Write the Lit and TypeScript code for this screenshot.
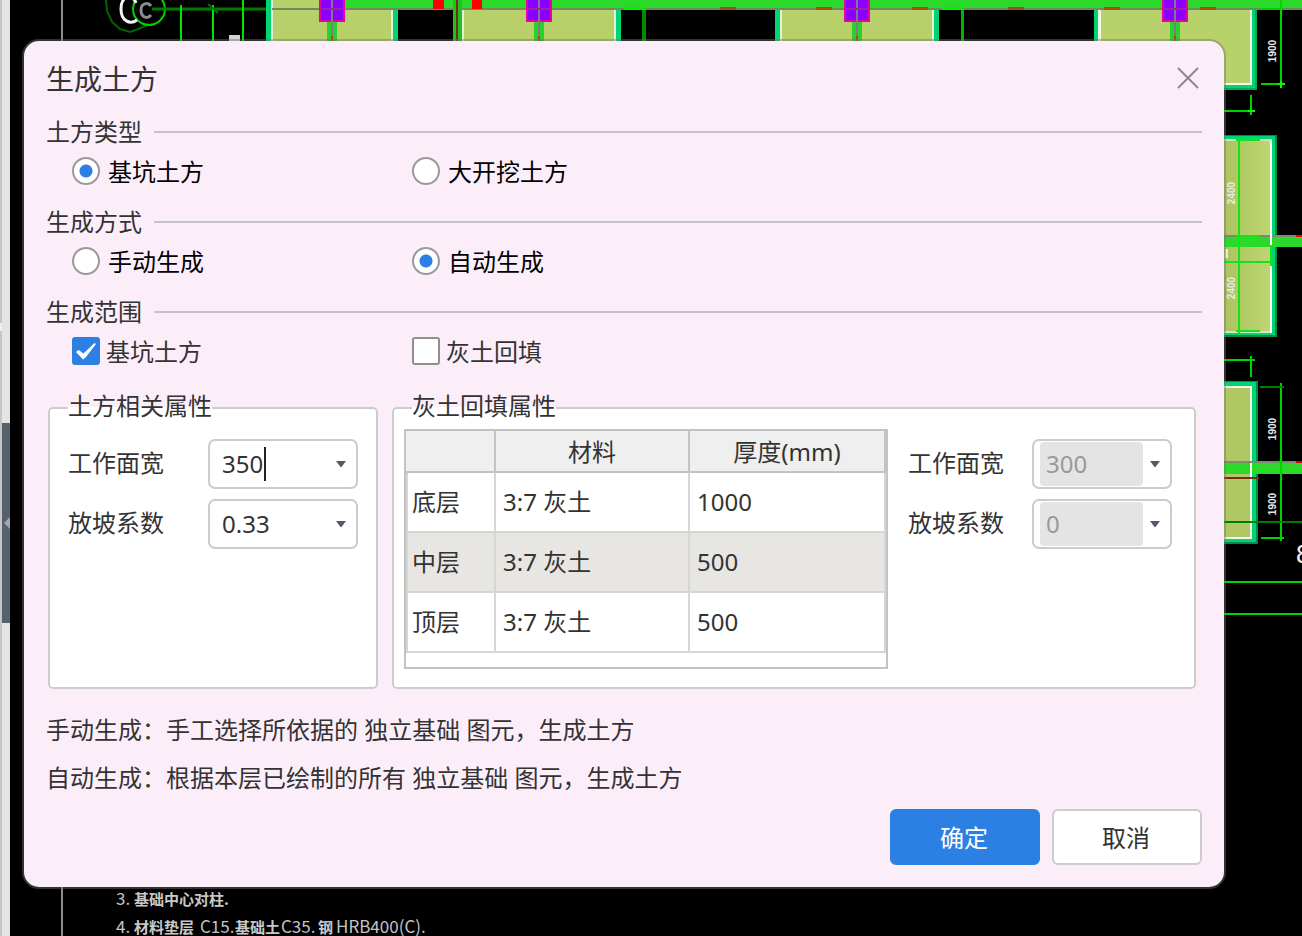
import { LitElement, html, svg, css } from "lit";
import { customElement, property } from "lit/decorators.js";

const FONT = css`"Noto Sans", "Noto Sans CJK SC", sans-serif`;

/** CAD drawing that stays visible behind the dialog. */
@customElement("cad-canvas")
class CadCanvas extends LitElement {
  static styles = css`
    :host { display: block; overflow: hidden; background: #000; }
    svg { display: block; width: 100%; height: 100%; }
    .note { font: 17px "Noto Sans CJK SC", sans-serif; fill: #c4c4c4; }
    .han { font: bold 15px "Noto Sans CJK SC", sans-serif; fill: #c8c8c8; }
    .dim { font: bold 10px "Liberation Sans", sans-serif; fill: #e8e8e8; }
    .axis { font: 26px "Liberation Sans", sans-serif; }
  `;

  private column(x: number) {
    return svg`
      <rect x=${x - 5} y="20" width="10" height="21" fill="#2bd02b"></rect>
      <rect x=${x - 12} y="-2" width="24" height="23" fill="#8a00ff" stroke="#e800a0" stroke-width="2"></rect>
      <rect x=${x - 1} y="0" width="2" height="41" fill="#7d7a90"></rect>
      <rect x=${x - 12} y="8" width="24" height="2" fill="#a020a8"></rect>
      <rect x=${x - 1} y="36" width="2" height="5" fill="#d03818"></rect>`;
  }

  private footing(x1: number, x2: number) {
    return svg`
      <rect x=${x1 - 5} y="0" width=${x2 - x1 + 10} height="41" fill="#00d572"></rect>
      <rect x=${x1} y="0" width=${x2 - x1} height="41" fill="#e4f0dc"></rect>
      <rect x=${x1 + 2} y="0" width=${x2 - x1 - 4} height="41" fill="#b8d06a"></rect>`;
  }

  private label(x: number, y: number, text: string) {
    return svg`<text class="dim" text-anchor="middle" transform=${`translate(${x + 4} ${y}) rotate(-90)`}>${text}</text>`;
  }

  render() {
    return html`
      <svg viewBox="0 0 1302 936" preserveAspectRatio="xMinYMin slice" aria-hidden="true">
        <defs>
          <linearGradient id="soil" x1="0" x2="1" y1="0" y2="0">
            <stop offset="0" stop-color="#a9c25f"></stop>
            <stop offset="1" stop-color="#bdd670"></stop>
          </linearGradient>
        </defs>
        <rect x="61" y="0" width="2" height="936" fill="#8c8c8c"></rect>

        <g fill="none" stroke-width="2">
          <path d="M106 0l1 11 5 11 8 7 10 3 11-4 8-4" stroke="#006400"></path>
          <circle cx="149" cy="9" r="16" stroke="#00d400"></circle>
          <path d="M136 3c-4-10-15-7-15 6 0 12 9 16 16 11" stroke="#f4f4f4" stroke-width="3"></path>
          <path d="M151 6c-3-4-10-3-10 4s6 10 10 5" stroke="#8c8c8c" stroke-width="3"></path>
          <path d="M152 9H272" stroke="#007a00" stroke-width="3"></path>
          <path d="M181 5V41M213 5V41M243 0V41" stroke="#00e600"></path>
          <path d="M208 4l10 9M274 4l6 10" stroke="#007000"></path>
        </g>
        <rect x="229" y="35" width="11" height="6" fill="#d4d4d4"></rect>

        ${this.footing(271, 393)}
        ${this.footing(462, 616)}
        ${this.footing(780, 934)}
        <g>
          <path d="M1094 0H1257V90H1094Z" fill="#00a85a"></path>
          <path d="M1094 0H1255V88H1094Z" fill="#00d572"></path>
          <path d="M1098 0H1252V85H1098Z" fill="#f4f8ec"></path>
          <path d="M1101 0H1250V83H1101Z" fill="#b8d26b"></path>
        </g>
        <rect x="345" y="0" width="957" height="8" fill="#2bd92b"></rect>
        <rect x="272" y="8" width="1030" height="2" fill="#6f8a5c"></rect>
        <g fill="#22c022">
          <rect x="453" y="0" width="3" height="41"></rect>
          <rect x="458" y="0" width="4" height="41"></rect>
          <rect x="642" y="8" width="4" height="33" fill="#008c00"></rect>
          <rect x="961" y="8" width="3" height="33" fill="#00b400"></rect>
          <rect x="624" y="7" width="22" height="3" fill="#00f000"></rect>
          <rect x="942" y="7" width="22" height="3" fill="#00f000"></rect>
        </g>
        <rect x="456" y="0" width="2" height="41" fill="#6e3014"></rect>
        <g fill="#ff0000">
          <rect x="433" y="0" width="11" height="9"></rect>
          <rect x="472" y="0" width="10" height="9"></rect>
        </g>
        <g fill="#b04a1c">
          <rect x="720" y="7" width="16" height="3"></rect>
          <rect x="816" y="7" width="16" height="3"></rect>
          <rect x="912" y="7" width="16" height="3"></rect>
          <rect x="1008" y="7" width="16" height="3"></rect>
          <rect x="1104" y="7" width="16" height="3"></rect>
          <rect x="1200" y="7" width="16" height="3"></rect>
        </g>
        ${[332, 539, 857, 1175].map((x) => this.column(x))}

        <g fill="none" stroke="#00d400" stroke-width="2">
          <path d="M1281 0V87M1261 84H1284M1260 9H1284M1224 111H1254M1251 95V115"></path>
          <path d="M1278 84h7M1281 81v7M1248 111h7" stroke="#00ff00"></path>
        </g>
        ${this.label(1272, 51, "1900")}

        <path d="M1220 135H1277V337H1220Z" fill="#008a4c"></path>
        <path d="M1220 136H1275V335H1220Z" fill="#00d572"></path>
        <path d="M1220 139H1272V333H1220Z" fill="#d4e6c8"></path>
        <path d="M1220 141H1270V331H1220Z" fill="url(#soil)"></path>
        <path d="M1271 141V333" stroke="#fff" stroke-width="2"></path>
        <rect x="1220" y="235" width="82" height="2" fill="#7b8a74"></rect>
        <rect x="1220" y="237" width="82" height="10" fill="#2bd92b"></rect>
        <rect x="1296" y="235" width="6" height="2" fill="#ff0000"></rect>
        <rect x="1270" y="235" width="2" height="10" fill="#fff"></rect>
        <path d="M1239 137V333M1224 262H1274M1271 245V266M1236 140h24M1236 236h24M1236 331h24"
          fill="none" stroke="#12e612" stroke-width="2"></path>
        <rect x="1225" y="249" width="3" height="9" fill="#e4eed8"></rect>
        ${this.label(1231, 193, "2400")}
        ${this.label(1231, 288, "2400")}

        <path d="M1220 381H1258V544H1220Z" fill="#008a4c"></path>
        <path d="M1220 382H1256V542H1220Z" fill="#00d572"></path>
        <path d="M1220 386H1252V539H1220Z" fill="#f4f8ec"></path>
        <path d="M1220 388H1250V537H1220Z" fill="#afc863"></path>
        <rect x="1220" y="461" width="82" height="2" fill="#7b8a74"></rect>
        <rect x="1220" y="463" width="82" height="11" fill="#2bd92b"></rect>
        <rect x="1296" y="461" width="6" height="2" fill="#d40000"></rect>
        <rect x="1220" y="477" width="39" height="2" fill="#7a2c14"></rect>
        <rect x="1250" y="463" width="2" height="11" fill="#f4f8ec"></rect>
        <g fill="none" stroke="#00d400" stroke-width="2">
          <path d="M1224 360H1255M1251 356V377M1281 383V541M1261 538H1284M1278 462h6"></path>
          <path d="M1260 387H1284M1220 522H1302" stroke="#007d00"></path>
          <path d="M1220 582H1302M1220 614H1302"></path>
        </g>
        ${this.label(1272, 429, "1900")}
        ${this.label(1272, 504, "1900")}
        <text class="axis" x="1296" y="563" fill="#f4f4f4">8</text>

        <text class="note" x="116" y="905">3.</text>
        <text class="han" x="134" y="905">基础中心对柱.</text>
        <text class="note" x="116" y="933">4.</text>
        <text class="han" x="134" y="933">材料垫层</text>
        <text class="note" x="200" y="933">C15.</text>
        <text class="han" x="235" y="933">基础土</text>
        <text class="note" x="281" y="933">C35.</text>
        <text class="han" x="318" y="933">钢</text>
        <text class="note" x="336" y="933">HRB400(C).</text>

        <rect x="0" y="0" width="2" height="936" fill="#c6c6c6"></rect>
        <rect x="2" y="0" width="8" height="936" fill="#e4e4e4"></rect>
        <rect x="0" y="323" width="2" height="8" fill="#ededed"></rect>
        <rect x="2" y="423" width="8" height="200" fill="#57616b"></rect>
        <path d="M10 517L4 523L10 529Z" fill="#a4a8ab"></path>
      </svg>
    `;
  }
}

/** Editable combo box: a text field with a drop-down arrow. */
@customElement("combo-field")
class ComboField extends LitElement {
  @property() label = "";
  @property() value = "";
  @property({ type: Boolean }) disabled = false;
  @property({ type: Boolean }) editing = false;

  static styles = css`
    :host {
      display: flex;
      align-items: center;
      justify-content: space-between;
      font: 24px/36px ${FONT};
      color: #333;
    }
    label { white-space: nowrap; padding-bottom: 2px; }
    .box {
      position: relative;
      display: flex;
      box-sizing: border-box;
      width: var(--combo-width, 150px);
      height: 50px;
      border: 2px solid #ccc;
      border-radius: 7px;
      background: #fff;
    }
    input {
      flex: 1;
      min-width: 0;
      margin: 0;
      padding: 0 0 0 12px;
      border: 0;
      outline: 0;
      background: transparent;
      font: inherit;
      color: #333;
      caret-color: transparent;
    }
    input:disabled {
      margin: 1px 0 1px 6px;
      padding-left: 6px;
      border-radius: 4px;
      background: #e4e4e4;
      color: #999;
    }
    button {
      display: grid;
      place-items: center;
      box-sizing: border-box;
      width: 30px;
      padding: 0;
      border: 0;
      background: none;
    }
    button svg { display: block; }
    .narrow { width: 27px; padding-right: 4px; }
    .caret {
      position: absolute;
      left: calc(13px + 3ch);
      top: 6px;
      width: 2px;
      height: 34px;
      background: #222;
    }
  `;

  render() {
    return html`
      <label for="field">${this.label}</label>
      <div class="box">
        <input id="field" type="text" .value=${this.value} ?disabled=${this.disabled} />
        ${this.editing ? html`<span class="caret"></span>` : ""}
        <button type="button" class=${this.disabled ? "narrow" : ""} ?disabled=${this.disabled} aria-label="展开">
          <svg width="10" height="6" viewBox="0 0 10 6"><path d="M0 0H10L5.5 6H4.5Z" fill="#4f5b6b"></path></svg>
        </button>
      </div>
    `;
  }
}

const LAYERS = [
  { name: "底层", material: "3:7 灰土", thickness: "1000" },
  { name: "中层", material: "3:7 灰土", thickness: "500" },
  { name: "顶层", material: "3:7 灰土", thickness: "500" },
];

const GROUPS = [
  { title: "土方类型", type: "radio", name: "kind", options: ["基坑土方", "大开挖土方"], checked: 0 },
  { title: "生成方式", type: "radio", name: "mode", options: ["手动生成", "自动生成"], checked: 1 },
  { title: "生成范围", type: "checkbox", name: "range", options: ["基坑土方", "灰土回填"], checked: 0 },
];

@customElement("app-root")
class AppRoot extends LitElement {
  static styles = css`
    :host {
      display: block;
      position: relative;
      box-sizing: border-box;
      min-height: 100vh;
      padding: 41px 78px 49px 24px;
      font: 24px/36px ${FONT};
      color: #333;
    }
    cad-canvas { position: absolute; inset: 0; }
    .dialog {
      position: relative;
      box-sizing: border-box;
      padding: 3px 22px 22px;
      border-radius: 15px;
      background: #fceef9;
      box-shadow: 0 0 0 2px rgba(116, 112, 116, 0.45);
    }
    header {
      display: flex;
      align-items: center;
      justify-content: space-between;
      height: 70px;
    }
    h1 { margin: 0; font-size: 28px; font-weight: 400; }
    .close { display: block; padding: 3px 3px 5px; border: 0; background: none; }
    .close svg { display: block; }
    .group { margin-bottom: 12px; }
    .group-title { display: flex; align-items: center; gap: 12px; }
    .group-title h2 { margin: 0; font-size: 24px; font-weight: 400; }
    .group-title::after { content: ""; flex: 1; height: 2px; background: #c4c3c7; }
    .options {
      display: grid;
      grid-template-columns: 340px 1fr;
      align-items: center;
      height: 42px;
      padding-left: 26px;
    }
    .option { display: flex; align-items: center; gap: 8px; color: #000; }
    .option.checkbox { gap: 6px; color: #333; }
    .option span { padding-top: 2px; }
    .option input {
      appearance: none;
      flex: none;
      box-sizing: border-box;
      width: 28px;
      height: 28px;
      margin: 0;
      border: 2px solid #999;
      background: #fff;
    }
    .option input[type="radio"] { border-radius: 50%; }
    .option input[type="radio"]:checked {
      background: radial-gradient(circle, #2c80e3 6px, #fff 7px);
    }
    .option input[type="checkbox"] { border-radius: 3px; border-color: #8f8f8f; }
    .option input[type="checkbox"]:checked {
      border-color: #2c80e3;
      background: #2c80e3
        url('data:image/svg+xml,<svg xmlns="http://www.w3.org/2000/svg" viewBox="0 0 24 24"><path d="M2 13L9 20.500L12 18L22 5L20.500 4L9.500 14.500L4.500 11Z" fill="white"/></svg>')
        center / 24px no-repeat;
    }
    .panels { display: flex; gap: 14px; margin: 18px 6px 0 2px; }
    fieldset {
      box-sizing: border-box;
      min-width: 0;
      height: 299px;
      margin: 0;
      padding: 0 10px;
      border: 2px solid #ccc;
      border-radius: 5px;
      background: #fff;
    }
    legend { margin-left: 8px; padding: 0 0 4px; line-height: 32px; }
    .earth { flex: 0 0 330px; }
    .lime { flex: 1; }
    .fields { display: grid; gap: 10px; padding: 13px 8px 0; }
    .lime-body { display: flex; justify-content: space-between; }
    .lime .fields { --combo-width: 140px; width: 264px; align-content: start; padding: 13px 12px 0 0; }
    .grid {
      box-sizing: border-box;
      flex: 0 1 484px;
      height: 240px;
      margin-top: 3px;
      border: 2px solid #c3c3c3;
      background: #fff;
    }
    table { width: 100%; table-layout: fixed; border-collapse: separate; border-spacing: 0; }
    th, td {
      box-sizing: border-box;
      padding: 0 0 0 7px;
      border: 0 solid #d6d6d6;
      border-width: 0 2px 2px 0;
      font-weight: 400;
      text-align: left;
      white-space: nowrap;
    }
    thead th { height: 42px; padding: 2px 0 0; border-color: #c3c3c3; background: #efefef; text-align: center; }
    tbody th, tbody td { height: 60px; }
    tbody th { border-left-width: 2px; padding-left: 4px; }
    tbody tr:nth-child(even) { background: #e8e6e2; }
    .c1 { width: 90px; }
    .c2 { width: 194px; }
    .notes { margin: 17px 0 7px; }
    .notes p { margin: 0; line-height: 48px; }
    footer { display: flex; justify-content: flex-end; gap: 12px; }
    footer button {
      box-sizing: border-box;
      width: 150px;
      height: 56px;
      padding: 2px 2px 0 0;
      border: 2px solid #ccc;
      border-radius: 6px;
      background: #fff;
      font: inherit;
      color: #333;
    }
    footer .primary { border-color: #2c80e3; background: #2c80e3; color: #fff; }
  `;

  render() {
    return html`
      <cad-canvas></cad-canvas>
      <main class="dialog" role="dialog" aria-labelledby="title">
        <header>
          <h1 id="title">生成土方</h1>
          <button class="close" type="button" aria-label="关闭">
            <svg width="22" height="22" viewBox="0 0 22 22">
              <path d="M1 1L21 21M21 1L1 21" stroke="#8f8790" stroke-width="2"></path>
            </svg>
          </button>
        </header>

        ${GROUPS.map(
          (g) => html`
            <section class="group">
              <div class="group-title"><h2>${g.title}</h2></div>
              <div class="options">
                ${g.options.map(
                  (text, i) => html`
                    <label class="option ${g.type}">
                      <input type=${g.type} name=${g.name} ?checked=${i === g.checked} />
                      <span>${text}</span>
                    </label>
                  `
                )}
              </div>
            </section>
          `
        )}

        <div class="panels">
          <fieldset class="earth">
            <legend>土方相关属性</legend>
            <div class="fields">
              <combo-field label="工作面宽" value="350" editing></combo-field>
              <combo-field label="放坡系数" value="0.33"></combo-field>
            </div>
          </fieldset>

          <fieldset class="lime">
            <legend>灰土回填属性</legend>
            <div class="lime-body">
              <div class="grid">
                <table>
                  <colgroup><col class="c1" /><col class="c2" /><col /></colgroup>
                  <thead>
                    <tr><th></th><th scope="col">材料</th><th scope="col">厚度(mm)</th></tr>
                  </thead>
                  <tbody>
                    ${LAYERS.map(
                      (l) => html`<tr><th scope="row">${l.name}</th><td>${l.material}</td><td>${l.thickness}</td></tr>`
                    )}
                  </tbody>
                </table>
              </div>
              <div class="fields">
                <combo-field label="工作面宽" value="300" disabled></combo-field>
                <combo-field label="放坡系数" value="0" disabled></combo-field>
              </div>
            </div>
          </fieldset>
        </div>

        <div class="notes">
          <p>手动生成：手工选择所依据的 独立基础 图元，生成土方</p>
          <p>自动生成：根据本层已绘制的所有 独立基础 图元，生成土方</p>
        </div>

        <footer>
          <button class="primary" type="button">确定</button>
          <button type="button">取消</button>
        </footer>
      </main>
    `;
  }
}
